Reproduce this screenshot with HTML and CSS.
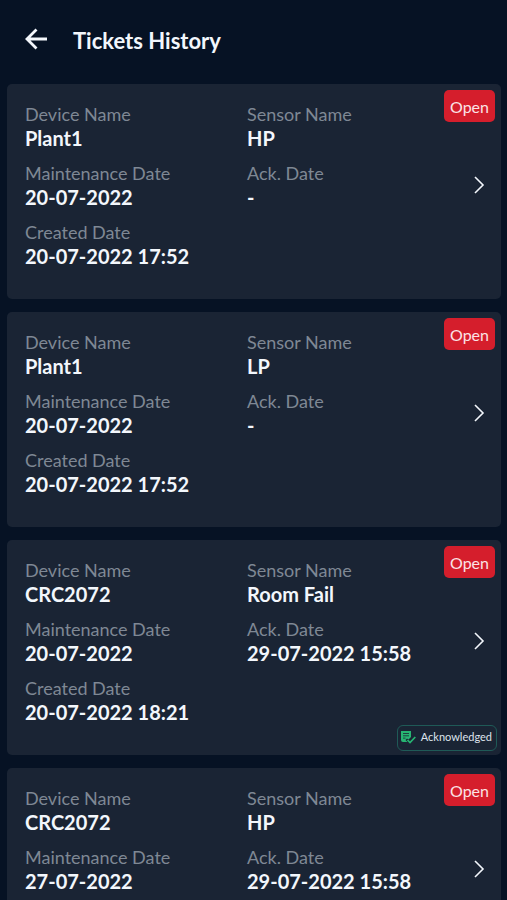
FILE: index.html
```html
<!DOCTYPE html>
<html lang="en">

<head>
  <meta charset="UTF-8">
  <meta name="viewport" content="width=device-width, initial-scale=1.0">
  <title>Tickets History</title>
  <link rel="stylesheet" href="styles.css">
</head>

<body>
  <header class="topbar">
    <button class="back" type="button" aria-label="Back">
      <svg width="24" height="24" viewBox="0 0 24 24">
        <path d="M12.5 2.5 L3 12 L12.5 21.5 M3 12 H23" />
      </svg>
    </button>
    <h1>Tickets History</h1>
  </header>
  <main class="tickets"></main>
  <script src="script.js"></script>
</body>

</html>
```

FILE: styles.css
```css
* {
  margin: 0;
  padding: 0;
  box-sizing: border-box;
}

body {
  display: flex;
  flex-direction: column;
  height: 100vh;
  overflow: hidden;
  background-color: #061224;
  color: #f3f7fc;
  font-family: Lato, "Liberation Sans", sans-serif;
}

button {
  border: none;
  background: none;
  color: inherit;
  font-family: inherit;
  cursor: pointer;
}

svg {
  display: block;
  fill: none;
  stroke: currentColor;
}

.topbar {
  display: flex;
  flex: none;
  align-items: center;
  gap: 25px;
  height: 84px;
  padding: 0 24px 6px;
}

.back svg {
  stroke-width: 2.8;
}

.topbar h1 {
  padding-top: 4px;
  font-size: 22px;
  line-height: 28px;
  font-weight: 700;
}

.tickets {
  display: flex;
  flex: 1;
  flex-direction: column;
  gap: 13px;
  min-height: 0;
  padding: 0 6px 13px 7px;
  overflow-y: auto;
  scrollbar-width: none;
}

.card {
  position: relative;
  display: flex;
  flex: none;
  align-items: center;
  gap: 4px;
  min-height: 215px;
  padding: 18px 16px 31px 18px;
  border-radius: 5px;
  background-color: #1a2434;
}

.fields {
  display: grid;
  flex: 1;
  align-self: flex-start;
  grid-template-columns: 1fr 1fr;
  row-gap: 11px;
}

.fields dt {
  color: #7f8894;
  font-size: 18px;
  line-height: 24px;
}

.fields dd {
  font-size: 20px;
  line-height: 24px;
  font-weight: 700;
}

.more svg {
  stroke-width: 1.6;
}

.status {
  position: absolute;
  top: 6px;
  right: 6px;
  padding: 1px 6px 0;
  border-radius: 5px;
  background-color: #d51e2c;
  color: #fbe3e6;
  font-size: 16px;
  line-height: 31px;
}

.ack {
  position: absolute;
  right: 4px;
  bottom: 4px;
  display: flex;
  align-items: center;
  gap: 5px;
  height: 26px;
  padding: 0 4px 4px 3px;
  border: 1px solid #1f5a57;
  border-radius: 6px;
  color: #dde3ec;
  font-size: 11px;
}

.ack svg {
  margin-top: 3px;
}
```

FILE: script.js
```js
const tickets = [
  { device: 'Plant1', sensor: 'HP', maintenance: '20-07-2022', ack: '-', created: '20-07-2022 17:52' },
  { device: 'Plant1', sensor: 'LP', maintenance: '20-07-2022', ack: '-', created: '20-07-2022 17:52' },
  { device: 'CRC2072', sensor: 'Room Fail', maintenance: '20-07-2022', ack: '29-07-2022 15:58', created: '20-07-2022 18:21' },
  { device: 'CRC2072', sensor: 'HP', maintenance: '27-07-2022', ack: '29-07-2022 15:58' }
]

function field(label, value) {
  return value ? `<div><dt>${label}</dt><dd>${value}</dd></div>` : ''
}

// only tickets with an ack date get the green label
function ackLabel(ticket) {
  if (ticket.ack === '-') return ''
  return `
    <span class="ack">
      <svg width="15" height="13" viewBox="0 0 15 13">
        <path d="M0 0 H10 V6 L7.5 8.5 L6 7.5 L4.5 9 L6.5 11 H2 Q0 11 0 9 Z" fill="#27b573" stroke="none" />
        <path d="M2 2.5 H8 M2 4.8 H8 M2 7.1 H4.5" stroke="#1a2434" stroke-width="0.8" />
        <path d="M6.5 9 L9 11.5 L14.3 6" stroke="#27b573" stroke-width="1.7" />
      </svg>
      Acknowledged
    </span>`
}

const list = document.querySelector('.tickets')

list.innerHTML = tickets.map(ticket => `
  <article class="card">
    <dl class="fields">
      ${field('Device Name', ticket.device)}
      ${field('Sensor Name', ticket.sensor)}
      ${field('Maintenance Date', ticket.maintenance)}
      ${field('Ack. Date', ticket.ack)}
      ${field('Created Date', ticket.created)}
    </dl>
    <button class="more" type="button" aria-label="Open ticket">
      <svg width="12" height="18" viewBox="0 0 12 18">
        <path d="M2 1 L10 9 L2 17" />
      </svg>
    </button>
    <span class="status">Open</span>
    ${ackLabel(ticket)}
  </article>`).join('')
```
